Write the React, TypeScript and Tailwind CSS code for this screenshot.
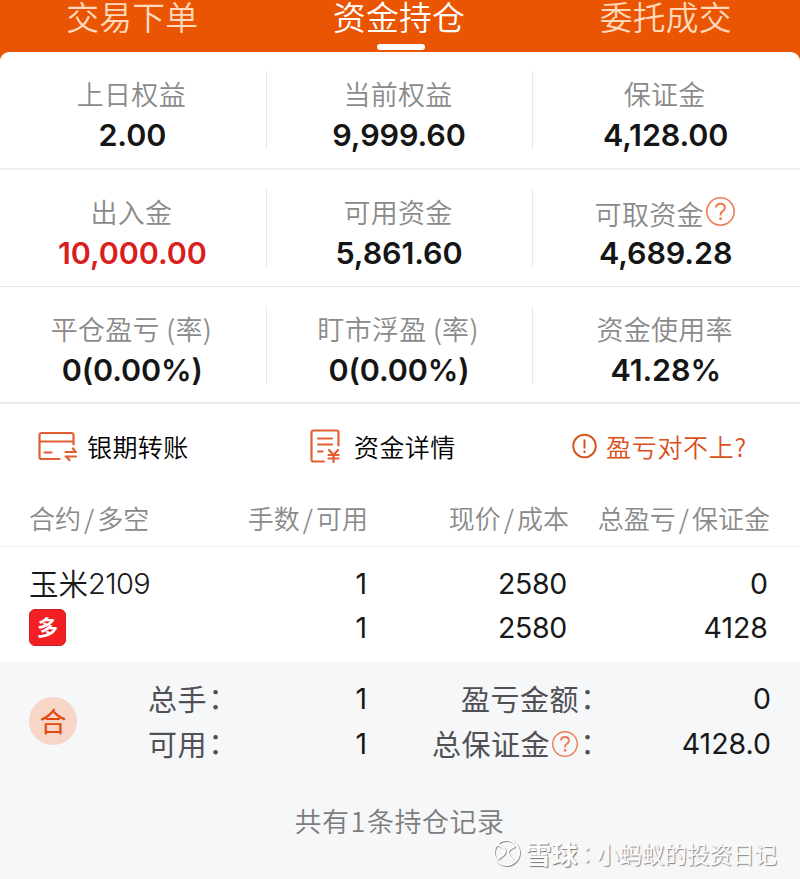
import type { ReactNode } from "react";

const cjk = "font-['Noto_Sans_CJK_SC',sans-serif]";
const num = "font-['Inter','Liberation_Sans',sans-serif]";

function Help({ className }: { className: string }) {
  return (
    <svg viewBox="0 0 28 28" fill="none" stroke="#ed7b54" className={className}>
      <circle cx="14" cy="14" r="13.2" strokeWidth="1.5" />
      <path d="M9.7 10.2C9.8 7.900 11.500 6.500 14 6.500c2.500 0 4.200 1.500 4.200 3.700 0 1.700-.9 2.600-2.100 3.500-1.500 1.100-2 1.800-2 3.200v1" strokeWidth="2" />
      <circle cx="14.1" cy="20.9" r="1.4" fill="#ed7b54" stroke="none" />
    </svg>
  );
}

function Stat({ label, value, help, red, divider }: { label: string; value: string; help?: boolean; red?: boolean; divider?: boolean }) {
  return (
    <div className="relative flex flex-1 flex-col items-center pr-[2px] pt-[22px]">
      <div className={`${cjk} flex h-10 -translate-x-px items-center whitespace-nowrap text-[27px] font-[350] leading-10 text-[#8a8a8a] tracking-[0.3px]`}>
        <span className={help ? "translate-y-[2px]" : ""}>{label}</span>
        {help && <Help className="mb-[2px] ml-0.5 size-[29px]" />}
      </div>
      <div className={`${num} mt-[3px] h-9 whitespace-nowrap text-[30.500px] font-[560] leading-9 tracking-[-0.1px] ${red ? "text-[#d81e20]" : "text-[#151515]"}`}>{value}</div>
      {divider && <div className="absolute right-0 top-[19px] h-[78px] w-px bg-[#e9e9e9]" />}
    </div>
  );
}

function StatRow({ children, className }: { children: ReactNode; className: string }) {
  return <div className={`flex ${className}`}>{children}</div>;
}

function Slash() {
  return <span className="mx-[3px]">/</span>;
}

function Colon() {
  return <span className="-ml-[6px] font-['Noto_Sans_CJK_TC',sans-serif]">：</span>;
}

export default function App() {
  return (
    <div className="h-[879px] w-[800px] overflow-hidden bg-[#f6f7f9]">
      <div className="bg-[#ea5504]">
        <header className={`${cjk} flex h-[52px] text-[32.800px] font-[350] leading-8 tracking-[0.2px] text-[#ffd9bd]`}>
          <div className="flex-1 pr-[3px] text-center">交易下单</div>
          <div className="flex flex-1 flex-col items-center pr-[1px] text-white">
            <div className="-translate-x-px">资金持仓</div>
            <div className="ml-[2px] mt-[12px] h-[6px] w-12 rounded-[3px] bg-white" />
          </div>
          <div className="flex-1 pr-[2px] text-center">委托成交</div>
        </header>
        <section className="h-[610px] rounded-t-[9px] bg-white">
          <StatRow className="h-[118px] border-b-2 border-[#efefef]">
            <Stat label="上日权益" value="2.00" divider />
            <Stat label="当前权益" value="9,999.60" divider />
            <Stat label="保证金" value="4,128.00" />
          </StatRow>
          <StatRow className="h-[117px] border-b border-[#e9e9e9]">
            <Stat label="出入金" value="10,000.00" red divider />
            <Stat label="可用资金" value="5,861.60" divider />
            <Stat label="可取资金" value="4,689.28" help />
          </StatRow>
          <StatRow className="h-[117px] border-b-2 border-[#ebebeb]">
            <Stat label="平仓盈亏 (率)" value="0(0.00%)" divider />
            <Stat label="盯市浮盈 (率)" value="0(0.00%)" divider />
            <Stat label="资金使用率" value="41.28%" />
          </StatRow>

          <div className={`${cjk} flex h-[84px] items-center text-[25px] font-[350] leading-9 tracking-[0.400px] text-black`}>
            <div className="flex w-[310px] items-center pl-[38px]">
              <svg viewBox="0 0 40 30" className="h-[30px] w-10" fill="none" stroke="#e35f33" strokeWidth="2.2" strokeLinecap="round" strokeLinejoin="round">
                <path d="M21.5 28H3.500a2 2 0 0 1-2-2V4a2 2 0 0 1 2-2h30a2 2 0 0 1 2 2v9.500M1.500 10.500h34M6.500 21.500h7M38 21H27.500M35 17.500l2.500 3.500M27.500 25.500H38M28 25.500l3.500 3.500" />
              </svg>
              <span className="ml-[9px]">银期转账</span>
            </div>
            <div className="flex w-[262px] items-center">
              <svg viewBox="0 0 30 34" className="h-[34px] w-[30px]" fill="none" stroke="#e35f33" strokeWidth="2.2" strokeLinecap="round" strokeLinejoin="round">
                <path d="M14 32.5H3.500a2 2 0 0 1-2-2v-27a2 2 0 0 1 2-2h23a2 2 0 0 1 2 2V16.500M8 9.500h14M8 15.500h14M8 22.500h4.500M19 21l4.500 5 4.500-5M23.500 26v7M18.500 26h10M18.500 29.500h10" />
              </svg>
              <span className="ml-[14px]">资金详情</span>
            </div>
            <div className="flex items-center text-[#d9501a]">
              <svg viewBox="0 0 26 26" className="size-[26px]" fill="none" stroke="#d2581f" strokeWidth="2">
                <circle cx="12.500" cy="13" r="11.300" />
                <path d="M12.500 6.500v9M12.500 17.500v2.500" />
              </svg>
              <span className="ml-2 tracking-[0.700px]">盈亏对不上?</span>
            </div>
          </div>

          <div className={`${cjk} flex h-[59px] items-center border-b border-[#eeeeee] pl-[29px] pr-[30px] pt-[2px] text-[26px] font-[350] leading-9 text-[#8a8a8a]`}>
            <div className="w-[160px]">合约<Slash />多空</div>
            <div className="w-[179px] text-right">手数<Slash />可用</div>
            <div className="w-[201px] text-right">现价<Slash />成本</div>
            <div className="flex-1 text-right">总盈亏<Slash />保证金</div>
          </div>

          <div className={`${num} flex pl-[29px] pr-8 pt-[14px] text-[28.500px] leading-[45px] text-[#191919]`}>
            <div className="w-[160px]">
              <div className="flex h-[45px] items-center">
                <span className={`${cjk} -mt-[3px] text-[29.500px] font-[350]`}>玉米</span>
                <span className="text-[29px] font-light tracking-[-0.600px]">2109</span>
              </div>
              <div className={`${cjk} mt-[3px] flex size-[37px] items-center justify-center rounded-[6px] border border-[#cd2025] bg-[#f21f25] pb-[4px] text-[21px] font-bold leading-8 text-white`}>多</div>
            </div>
            <div className="w-[178px] text-right"><div>1</div><div className="-mt-px">1</div></div>
            <div className="w-[200px] text-right tracking-[-0.300px]"><div>2580</div><div className="-mt-px">2580</div></div>
            <div className="flex-1 text-right"><div>0</div><div className="-mt-px">4128</div></div>
          </div>
        </section>
      </div>

      <section className="flex h-[217px] flex-col">
        <div className={`${cjk} flex h-[119px] pl-[29px] pr-[29px] pt-[14px] text-[29px] leading-[45px] text-[#505055]`}>
          <div className="mt-[21px] flex size-12 items-center justify-center rounded-full bg-[#f7d5c7] pb-px text-[27px] leading-10 text-[#df4a0c]">合</div>
          <div className="ml-[71px] w-[90px] whitespace-nowrap tracking-[0.500px]"><div>总手<Colon /></div><div>可用<Colon /></div></div>
          <div className={`${num} w-[129px] text-right text-[28.500px] text-[#191919]`}><div>1</div><div>1</div></div>
          <div className="ml-[65px] flex w-[190px] flex-col whitespace-nowrap tracking-[0.500px]">
            <div className="ml-[29px]">盈亏金额<Colon /></div>
            <div className="flex items-center">总保证金<Help className="ml-[2px] size-[26px] shrink-0" /><span className="ml-[1px]"><Colon /></span></div>
          </div>
          <div className={`${num} flex-1 text-right text-[28.500px] text-[#191919]`}><div>0</div><div>4128.0</div></div>
        </div>
        <div className={`${cjk} mt-[20px] pr-[1px] text-center text-[27px] font-[350] leading-10 tracking-[0.500px] text-[#7d7d7d]`}>共有<span className="mx-[1px]">1</span>条持仓记录</div>
        <div className={`${cjk} -mt-[6px] flex h-9 items-center justify-end pr-[23px] text-[22.500px] leading-8 text-[#fbfbfb]`}>
          <svg viewBox="0 0 30 30" className="mr-[3px] size-[30px]" fill="none" strokeLinecap="round">
            <g stroke="#8f8f92" strokeWidth="2.200" transform="translate(.8 .8)">
              <circle cx="14.500" cy="14.500" r="12.500" />
              <path d="M6 7c3 .5 7 3.500 7 6.500S9 18 6.500 20.500M22 8.500c-3 1.500-6 3.500-6 6s2.500 5 5 8" />
            </g>
            <g stroke="#fbfbfb" strokeWidth="2.200">
              <circle cx="14.500" cy="14.500" r="12.500" />
              <path d="M6 7c3 .5 7 3.500 7 6.500S9 18 6.500 20.500M22 8.500c-3 1.500-6 3.500-6 6s2.500 5 5 8" />
            </g>
          </svg>
          <span className="text-[26px] font-bold [text-shadow:1px_1px_1px_#77777a]">雪球</span>
          <span className="[text-shadow:1px_1px_1px_#858588]"><span className="-ml-[2px] -mr-[1px] font-['Noto_Sans_CJK_TC',sans-serif]">：</span>小蚂蚁的投资日记</span>
        </div>
      </section>
    </div>
  );
}
